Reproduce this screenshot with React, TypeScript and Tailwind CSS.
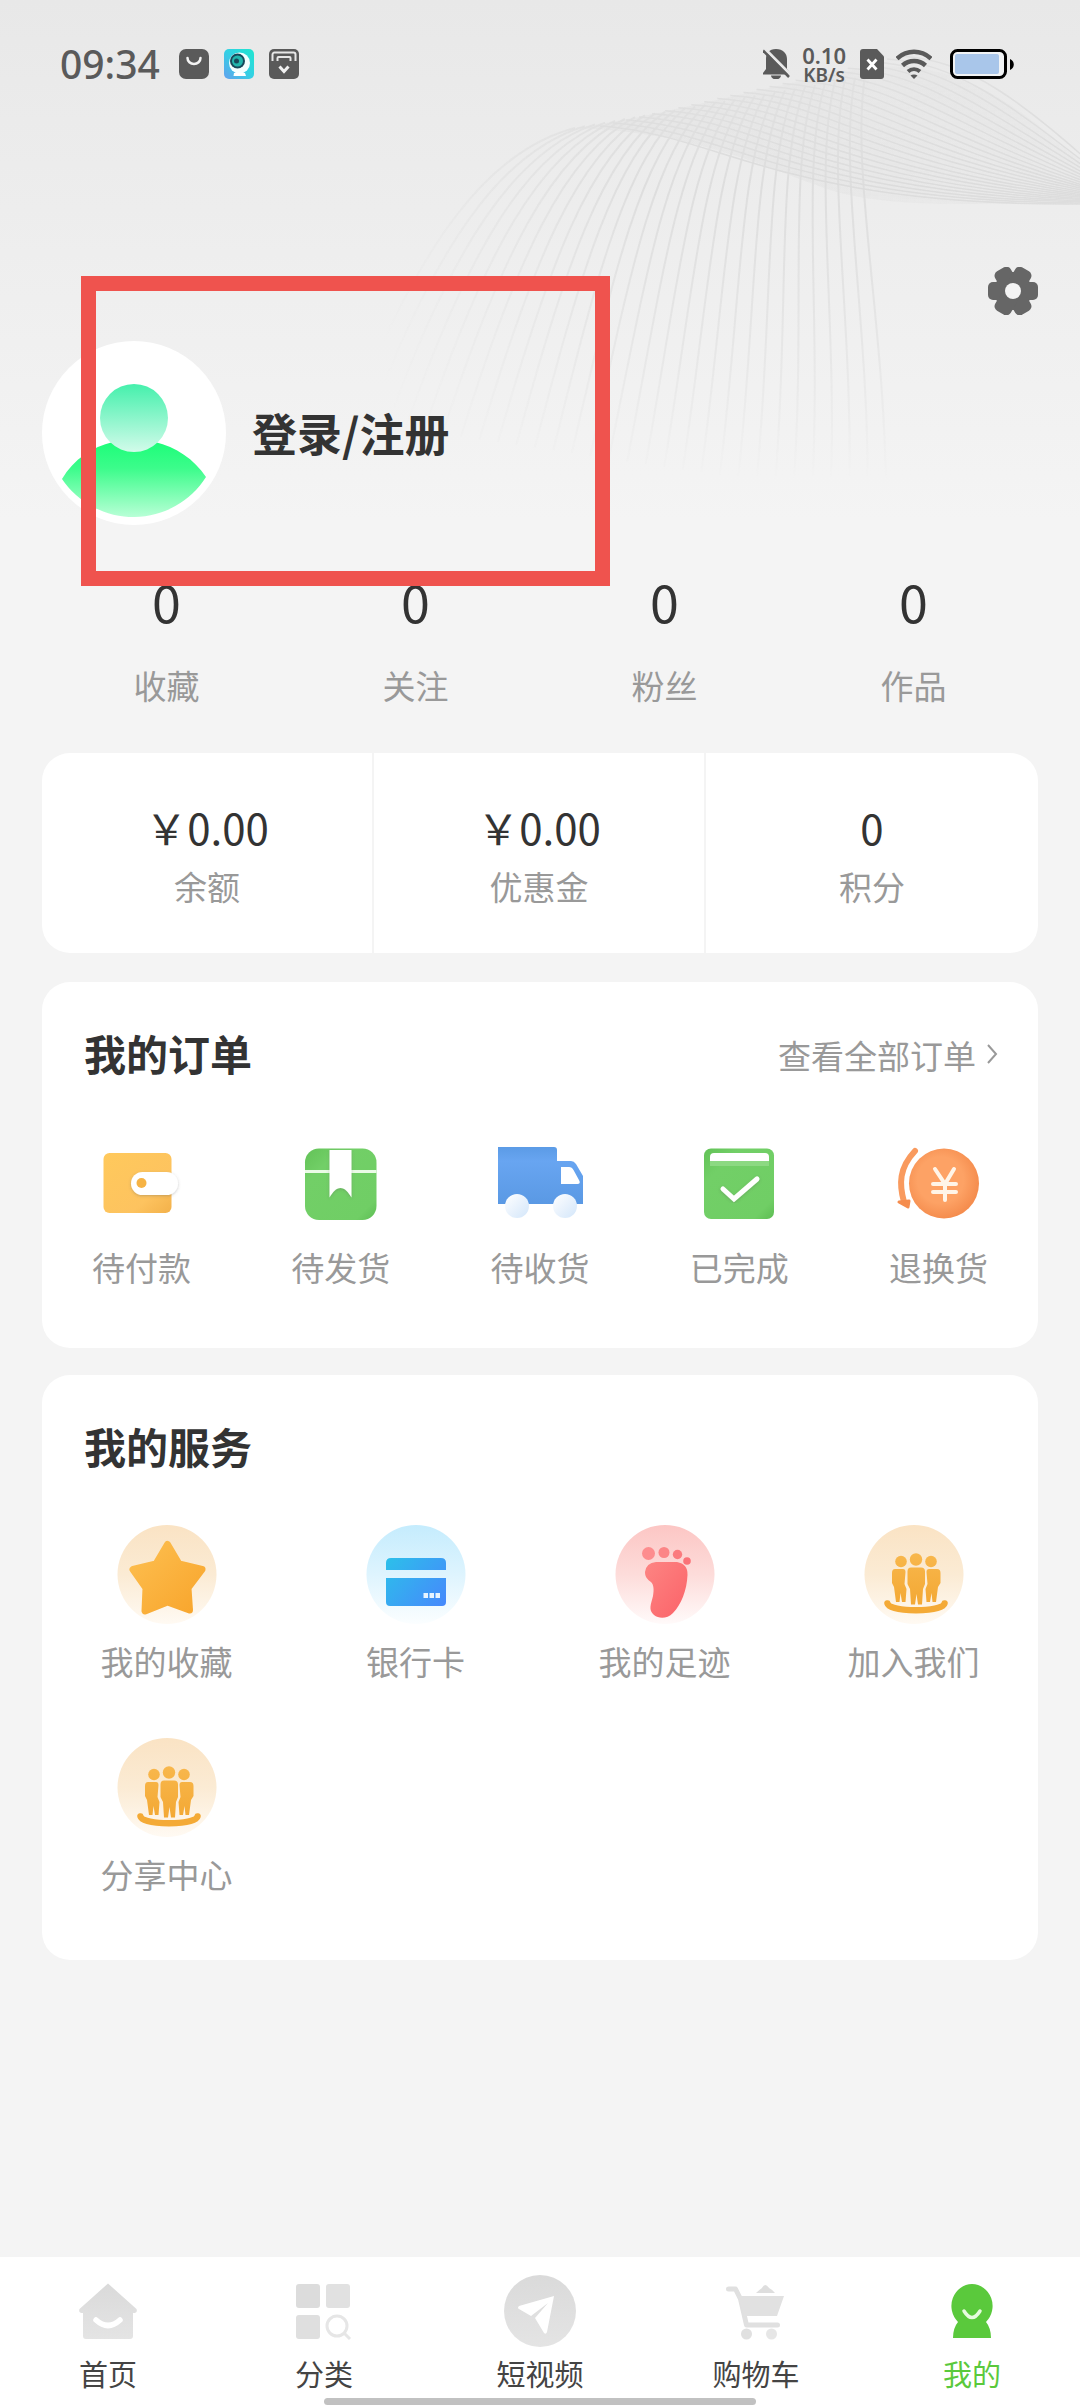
import type { ReactNode } from "react";

const lerp = (a: number, b: number, t: number) => a + (b - a) * t;
const curve = (from: number[], to: number[], t: number) => {
  const p = from.map((v, i) => lerp(v, to[i], t).toFixed(1));
  return `M${p[0]} ${p[1]}C${p[2]} ${p[3]} ${p[4]} ${p[5]} ${p[6]} ${p[7]}`;
};

/* Faded mesh of flowing lines behind the header */
function Waves() {
  const fan = Array.from({ length: 30 }, (_, i) => i / 29);
  const band = Array.from({ length: 24 }, (_, i) => i / 23);
  return (
    <svg className="pointer-events-none absolute right-0 top-0 h-[520px] w-[720px]" viewBox="360 0 720 520" fill="none" aria-hidden="true">
      <defs>
        <linearGradient id="fade" x1="0" y1="60" x2="0" y2="480" gradientUnits="userSpaceOnUse">
          <stop offset="0" stopColor="#fff" stopOpacity="0.6" />
          <stop offset="0.3" stopColor="#fff" stopOpacity="0.9" />
          <stop offset="0.7" stopColor="#fff" stopOpacity="0.45" />
          <stop offset="1" stopColor="#fff" stopOpacity="0" />
        </linearGradient>
        <linearGradient id="fanFade" x1="380" y1="0" x2="640" y2="0" gradientUnits="userSpaceOnUse">
          <stop offset="0" stopColor="#dcdcdc" stopOpacity="0" />
          <stop offset="1" stopColor="#dcdcdc" />
        </linearGradient>
        <linearGradient id="bandFill" x1="600" y1="100" x2="1080" y2="190" gradientUnits="userSpaceOnUse">
          <stop offset="0" stopColor="#dedede" stopOpacity="0.5" />
          <stop offset="1" stopColor="#dedede" stopOpacity="0.25" />
        </linearGradient>
        <mask id="waveMask" maskUnits="userSpaceOnUse" x="360" y="0" width="720" height="520">
          <rect x="360" width="720" height="520" fill="url(#fade)" />
        </mask>
      </defs>
      <g mask="url(#waveMask)">
        <path d="M575 128C680 112 740 92 865 68C950 60 1000 90 1080 160V198C980 208 880 206 830 190C770 170 700 132 575 128Z" fill="url(#bandFill)" />
        {fan.map((t) => (
          <path key={t} d={curve([575, 128, 490, 150, 420, 240, 350, 420], [865, 76, 850, 170, 886, 330, 886, 500], t)} stroke="url(#fanFade)" strokeWidth="2" />
        ))}
        {band.map((t) => (
          <path key={t} d={curve([600, 126, 720, 134, 780, 206, 1080, 204], [900, 56, 970, 60, 1020, 100, 1110, 180], t)} stroke="#dadada" strokeWidth="1.5" />
        ))}
      </g>
    </svg>
  );
}

function StatusBar() {
  return (
    <div className="relative flex h-32 items-center justify-between pl-[60px] pr-[66px] text-[#5a5a5a]">
      <div className="flex items-center gap-[15px]">
        <span className="mr-1 font-['Noto_Sans'] text-[39px] font-medium leading-10">09:34</span>
        <svg className="size-[30px]" viewBox="0 0 30 30" aria-hidden="true">
          <rect width="30" height="30" rx="7" fill="#5a5a5a" />
          <path d="M8.500 9a6.500 6 0 0 0 13 0" fill="none" stroke="#f2f2f2" strokeWidth="2.500" strokeLinecap="round" />
        </svg>
        <svg className="size-[30px]" viewBox="0 0 30 30" aria-hidden="true">
          <defs>
            <linearGradient id="cam" x1="0" y1="1" x2="1" y2="0">
              <stop offset="0" stopColor="#63a0ee" />
              <stop offset="0.500" stopColor="#34d0e4" />
              <stop offset="1" stopColor="#1fe6cf" />
            </linearGradient>
          </defs>
          <rect width="30" height="30" rx="5" fill="url(#cam)" />
          <circle cx="15.500" cy="14" r="10.500" fill="#f4ffff" />
          <path d="M10 24h11l1 3H9.500z" fill="#fff" />
          <circle cx="13.500" cy="12" r="7.500" fill="#17495b" />
          <circle cx="13.500" cy="12" r="5.500" fill="#22b5ac" />
          <circle cx="12.500" cy="12" r="2.500" fill="#17495b" />
        </svg>
        <svg className="size-[30px]" viewBox="0 0 30 30" aria-hidden="true">
          <rect width="30" height="30" rx="5" fill="#5a5a5a" />
          <path d="M3.500 12V5.500a2 2 0 0 1 2-2h19a2 2 0 0 1 2 2V12" fill="none" stroke="#e8e8e8" strokeWidth="2" />
          <path d="M8.500 12V9A1 1 0 0 1 9.500 8h11a1 1 0 0 1 1 1v3" fill="none" stroke="#e8e8e8" strokeWidth="2" />
          <path d="M10.500 17.500l4.500 5 4.500-5" fill="none" stroke="#f2f2f2" strokeWidth="3" />
        </svg>
      </div>
      <div className="flex items-center">
        <svg className="h-[30px] w-[27px]" viewBox="0 0 27 30" aria-hidden="true">
          <path d="M13 0c7 0 11 4.500 11 10v10l3 4v1.500H0V24l3-4V10C3 4.500 6 0 13 0z" fill="#5a5a5a" />
          <path d="M8 26.500h10a5 4 0 0 1-10 0z" fill="#5a5a5a" />
          <path d="M2 0L28 26" stroke="#e8e8e8" strokeWidth="3" />
          <path d="M0 1.500L26 28" stroke="#5a5a5a" strokeWidth="2.500" />
        </svg>
        <div className="ml-3 flex flex-col items-center font-['Noto_Sans'] font-semibold">
          <span className="text-[22px] leading-[22px]">0.10</span>
          <span className="text-[19px] leading-[19px]">KB/s</span>
        </div>
        <svg className="ml-[14px] h-[30px] w-6" viewBox="0 0 24 30" aria-hidden="true">
          <path d="M3 0h14l7 7.500V27a3 3 0 0 1-3 3H3a3 3 0 0 1-3-3V3a3 3 0 0 1 3-3z" fill="#5a5a5a" />
          <path d="M7.500 10.500l9 10m0-10l-9 10" stroke="#fff" strokeWidth="2.800" />
        </svg>
        <svg className="ml-3 h-[30px] w-9" viewBox="0 0 36 30" fill="none" stroke="#5a5a5a" strokeWidth="4.500" aria-hidden="true">
          <path d="M1 9.500C11 0.500 25 0.500 35 9.500" />
          <path d="M6.500 16.500C13 10.500 23 10.500 29.500 16.500" />
          <path d="M12 22.500c3.500-3 8.500-3 12 0" strokeWidth="4" />
          <path d="M14.500 26.500c2-1.500 5-1.500 7 0L18 30z" fill="#5a5a5a" stroke="none" />
        </svg>
        <svg className="ml-[18px] h-[30px] w-16" viewBox="0 0 64 30" aria-hidden="true">
          <rect x="1.500" y="1.500" width="54" height="27" rx="6" fill="#f1f3f5" stroke="#000" strokeWidth="3" />
          <rect x="5" y="5" width="44" height="20" rx="2" fill="#a9c6ea" />
          <path d="M60 10c5 2 5 9 0 11z" fill="#000" />
        </svg>
      </div>
    </div>
  );
}

function Avatar() {
  return (
    <svg className="size-[184px] shrink-0" viewBox="0 0 184 184" aria-hidden="true">
      <defs>
        <linearGradient id="head" x1="0" y1="0" x2="0" y2="1">
          <stop offset="0" stopColor="#45f0ac" />
          <stop offset="1" stopColor="#d2fbea" />
        </linearGradient>
        <linearGradient id="torso" x1="0" y1="0" x2="0" y2="1">
          <stop offset="0" stopColor="#1dfd79" />
          <stop offset="0.350" stopColor="#3cfc8b" />
          <stop offset="1" stopColor="#b8ffd6" />
        </linearGradient>
      </defs>
      <circle cx="92" cy="92" r="92" fill="#fff" />
      <path d="M20 138C32 118 50 106 71 101A36 36 0 0 0 113 101C134 106 152 118 164 136A86 86 0 0 1 20 138Z" fill="url(#torso)" />
      <circle cx="92" cy="77" r="34" fill="url(#head)" />
    </svg>
  );
}

const iconDefs = (
  <svg className="absolute size-0" aria-hidden="true">
    <defs>
      <linearGradient id="gold" x1="0" y1="0" x2="1" y2="1">
        <stop offset="0" stopColor="#ffc95c" />
        <stop offset="0.700" stopColor="#fdc35f" />
        <stop offset="1" stopColor="#f3b14a" />
      </linearGradient>
      <linearGradient id="leaf" x1="0" y1="0" x2="1" y2="1">
        <stop offset="0" stopColor="#62c257" />
        <stop offset="0.250" stopColor="#72cf67" />
        <stop offset="0.850" stopColor="#70ce65" />
        <stop offset="1" stopColor="#5dbd53" />
      </linearGradient>
      <linearGradient id="sky" x1="0" y1="0" x2="0" y2="1">
        <stop offset="0" stopColor="#5b9be6" />
        <stop offset="0.250" stopColor="#68a5f1" />
        <stop offset="1" stopColor="#5a99e4" />
      </linearGradient>
      <linearGradient id="wheel" x1="0" y1="0" x2="1" y2="1">
        <stop offset="0" stopColor="#fff" />
        <stop offset="1" stopColor="#d3e6fa" />
      </linearGradient>
      <radialGradient id="coin" cx="0.450" cy="0.450" r="0.550">
        <stop offset="0.600" stopColor="#fda265" />
        <stop offset="1" stopColor="#f58d4e" />
      </radialGradient>
      <linearGradient id="peach" x1="0" y1="0" x2="0" y2="1">
        <stop offset="0" stopColor="#fae3c4" />
        <stop offset="0.500" stopColor="#fbebd4" />
        <stop offset="1" stopColor="#fffaf3" />
      </linearGradient>
      <linearGradient id="ice" x1="0" y1="0" x2="0" y2="1">
        <stop offset="0" stopColor="#c5ecfd" />
        <stop offset="0.500" stopColor="#def4fe" />
        <stop offset="1" stopColor="#fbfeff" />
      </linearGradient>
      <linearGradient id="rose" x1="0" y1="0" x2="0" y2="1">
        <stop offset="0" stopColor="#fcc6c4" />
        <stop offset="0.500" stopColor="#fddcda" />
        <stop offset="1" stopColor="#fffafa" />
      </linearGradient>
      <linearGradient id="star" x1="0" y1="0" x2="1" y2="1">
        <stop offset="0" stopColor="#fdbf50" />
        <stop offset="1" stopColor="#f8a52c" />
      </linearGradient>
      <linearGradient id="bank" x1="20" y1="34" x2="80" y2="82" gradientUnits="userSpaceOnUse">
        <stop offset="0" stopColor="#2cc0ea" />
        <stop offset="1" stopColor="#4688fc" />
      </linearGradient>
      <linearGradient id="sole" x1="0" y1="0" x2="1" y2="1">
        <stop offset="0" stopColor="#fd8583" />
        <stop offset="1" stopColor="#fb6268" />
      </linearGradient>
      <linearGradient id="crew" x1="0" y1="30" x2="0" y2="92" gradientUnits="userSpaceOnUse">
        <stop offset="0" stopColor="#f8b74c" />
        <stop offset="1" stopColor="#f2a52f" />
      </linearGradient>
      <linearGradient id="silver" x1="0" y1="0" x2="0" y2="1">
        <stop offset="0" stopColor="#dadada" />
        <stop offset="1" stopColor="#e4e4e4" />
      </linearGradient>
      <filter id="shade" x="-20%" y="-20%" width="140%" height="140%">
        <feDropShadow dx="0" dy="1" stdDeviation="1.500" floodColor="#555" floodOpacity="0.300" />
      </filter>
    </defs>
  </svg>
);

function OrderIcon({ children }: { children: ReactNode }) {
  return (
    <svg className="size-24" viewBox="0 0 96 96" fill="none" aria-hidden="true">
      {children}
    </svg>
  );
}

const orders = [
  {
    label: "待付款",
    icon: (
      <OrderIcon>
        <rect x="9.500" y="17" width="68" height="60" rx="6" fill="url(#gold)" />
        <rect x="37" y="36" width="47" height="23" rx="11.500" fill="#fff" filter="url(#shade)" />
        <circle cx="47.500" cy="47" r="5" fill="#f6b344" />
      </OrderIcon>
    ),
  },
  {
    label: "待发货",
    icon: (
      <OrderIcon>
        <rect x="12" y="12.500" width="71.500" height="71.500" rx="14" fill="url(#leaf)" />
        <path d="M12 35.500h71.500" stroke="#eafbe6" strokeWidth="3" />
        <path d="M36.500 14h22v47.500C55 56 52 52 47.500 52S40 56 36.500 61.500Z" fill="#fff" filter="url(#shade)" />
      </OrderIcon>
    ),
  },
  {
    label: "待收货",
    icon: (
      <OrderIcon>
        <path d="M6 11h56q3 0 3 3v11h14q3 0 5 3l7 12v28H6Z" fill="url(#sky)" />
        <path d="M69 31h8q3 0 4.500 3l6 11q1 3-2 3H69Z" fill="#fff" />
        <circle cx="25" cy="70" r="12" fill="url(#wheel)" />
        <circle cx="73" cy="70" r="12" fill="url(#wheel)" />
      </OrderIcon>
    ),
  },
  {
    label: "已完成",
    icon: (
      <OrderIcon>
        <rect x="13" y="12.500" width="70" height="70.500" rx="7" fill="url(#leaf)" />
        <path d="M19 25v-4q0-4 4-4h51q4 0 4 4v4Z" fill="#fff" />
        <path d="M19 25h59v5H19Z" fill="#8cd982" />
        <path d="M32 53l11 10 23-20" stroke="#fff" strokeWidth="5" strokeLinecap="round" filter="url(#shade)" />
      </OrderIcon>
    ),
  },
  {
    label: "退换货",
    icon: (
      <OrderIcon>
        <circle cx="54" cy="47.500" r="35" fill="url(#coin)" />
        <path d="M25 15C9 32 9 48 14 66" stroke="#f99a5e" strokeWidth="6" strokeLinecap="round" />
        <path d="M9 66l10-1-1 6z" fill="#f58d4e" stroke="#f58d4e" strokeWidth="3" strokeLinejoin="round" />
        <path d="M45 33l10 15 9-15M55 48v16M43 48h23M43 56h23" stroke="#fff5e8" strokeWidth="4" strokeLinecap="round" />
      </OrderIcon>
    ),
  },
];

function ServiceIcon({ fill, children }: { fill: string; children: ReactNode }) {
  return (
    <svg className="size-[100px]" viewBox="0 0 100 100" fill="none" aria-hidden="true">
      <circle cx="50" cy="50.500" r="49.500" fill={fill} />
      {children}
    </svg>
  );
}

const crew = (
  <ServiceIcon fill="url(#peach)">
    <g fill="url(#crew)">
      <circle cx="37" cy="37.500" r="5.800" />
      <circle cx="67" cy="37.500" r="5.800" />
      <circle cx="52" cy="35.500" r="6.200" />
      <path d="M31 45h8q2.500 0 2.500 3l-1 12 2 5-1 13h-3.500l-1.500-9-1 9H32l-2-15-2-4V49q0-4 3-4z" />
      <path d="M73 45h-8q-2.500 0-2.500 3l1 12-2 5 1 13H66l1.500-9 1 9H72l2-15 2.500-4V49q0-4-3.500-4z" />
      <path d="M47 43.500h10q4 0 4 4V60l-2 5-1 15.500h-4L52.500 70 51 80.500h-4L46 65l-2.500-5V47.500q0-4 3.500-4z" />
    </g>
    <path d="M23.500 79.500C26 88.500 78 88.500 80.500 79.500" stroke="#f4aa36" strokeWidth="6.500" strokeLinecap="round" />
  </ServiceIcon>
);

const services = [
  {
    label: "我的收藏",
    icon: (
      <ServiceIcon fill="url(#peach)">
        <path d="M50.500 20.500L62 40 85 45.500 71 64 72.500 86 50.500 78 28 87 29 64 16 45.500 39 40Z" fill="url(#star)" stroke="url(#star)" strokeWidth="7" strokeLinejoin="round" />
      </ServiceIcon>
    ),
  },
  {
    label: "银行卡",
    icon: (
      <ServiceIcon fill="url(#ice)">
        <path d="M20 46v-7q0-5 5-5h50q5 0 5 5v7Z" fill="url(#bank)" />
        <path d="M20 54h60v24q0 4-4 4H24q-4 0-4-4Z" fill="url(#bank)" />
        <path d="M57.500 69h4.500v5h-4.500zM63.500 69H68v5h-4.500zM69.500 69H74v5h-4.500z" fill="#e6f4ff" />
      </ServiceIcon>
    ),
  },
  {
    label: "我的足迹",
    icon: (
      <ServiceIcon fill="url(#rose)">
        <circle cx="33.500" cy="29.500" r="6.500" fill="#fd8d8e" />
        <circle cx="49" cy="28.500" r="5.500" fill="#fc8586" />
        <circle cx="62.500" cy="30.500" r="4.700" fill="#fb7b7e" />
        <circle cx="72" cy="37" r="3.800" fill="#fa7378" />
        <path d="M41 38H62Q73 40 72.500 51C72 66 66 81 58 89C52 95 44 95 39 91C33 86 36 80 38 72C39 66 39 61 36 58C32 55 30 53 30 48Q31 39 41 38Z" fill="url(#sole)" />
      </ServiceIcon>
    ),
  },
  { label: "加入我们", icon: crew },
  { label: "分享中心", icon: crew },
];

const tabs = [
  {
    label: "首页",
    icon: (
      <svg className="size-[76px]" viewBox="0 0 76 76" fill="none" aria-hidden="true">
        <path d="M38 10.500L66.500 36q1.500 4-3.500 4v23q0 3-3 3H16q-3 0-3-3V40q-5 0-3.500-4Z" fill="url(#silver)" />
        <path d="M26 47q12 11 24 0" stroke="#fff" strokeWidth="5.500" strokeLinecap="round" />
      </svg>
    ),
  },
  {
    label: "分类",
    icon: (
      <svg className="size-[76px]" viewBox="0 0 76 76" fill="none" aria-hidden="true">
        <rect x="10" y="11" width="24" height="24" rx="3" fill="#dcdcdc" />
        <rect x="40" y="11" width="24" height="24" rx="3" fill="#e1e1e1" />
        <rect x="10" y="42" width="24" height="24" rx="3" fill="#dfdfdf" />
        <circle cx="51" cy="53" r="10" stroke="#e6e6e6" strokeWidth="3" />
        <path d="M58 60l6 6" stroke="#e6e6e6" strokeWidth="3" />
      </svg>
    ),
  },
  {
    label: "短视频",
    icon: (
      <svg className="size-[76px]" viewBox="0 0 76 76" fill="none" aria-hidden="true">
        <circle cx="38" cy="38" r="36" fill="url(#silver)" />
        <path d="M52 23L17 33q-2 2 0 3l12 7 17-13-13 15 9 15q2 2 3-1L52 23Z" fill="#fff" />
      </svg>
    ),
  },
  {
    label: "购物车",
    icon: (
      <svg className="size-[76px]" viewBox="0 0 76 76" fill="none" aria-hidden="true">
        <path d="M10.500 16h7l5 10 6 26h31" stroke="#e0e0e0" strokeWidth="5" strokeLinecap="round" strokeLinejoin="round" />
        <path d="M20 23h46l-7 20H27Z" fill="#e1e1e1" />
        <path d="M38 20q3-3 6-5 3-6 7 0 4 2 6 5Z" fill="#dedede" />
        <circle cx="28.500" cy="61" r="5.500" fill="#e0e0e0" />
        <circle cx="53.500" cy="61" r="5.500" fill="#e6e6e6" />
      </svg>
    ),
  },
  {
    label: "我的",
    active: true,
    icon: (
      <svg className="size-[76px]" viewBox="0 0 76 76" fill="none" aria-hidden="true">
        <path d="M38 11a21 22 0 0 1 14 38q5 6 5 16H19q0-10 5-16A21 22 0 0 1 38 11Z" fill="#5ac93c" />
        <path d="M30 38q8 13 16 0" stroke="#e7fbdf" strokeWidth="3.500" strokeLinecap="round" />
      </svg>
    ),
  },
];

const stats = ["收藏", "关注", "粉丝", "作品"];
const wallet = [
  { value: "\uFFE50.00", label: "余额" },
  { value: "\uFFE50.00", label: "优惠金" },
  { value: "0", label: "积分" },
];

export default function App() {
  return (
    <div className="relative flex min-h-screen flex-col overflow-hidden bg-[#f4f4f4] bg-[linear-gradient(#e8e8e8,#ebebeb_120px,#f4f4f4_520px)] font-['Noto_Sans_CJK_SC',sans-serif] text-[#333]">
      <Waves />
      {iconDefs}
      <StatusBar />
      <main className="relative px-[42px]">
        <div className="flex justify-end pt-[139px]">
          <button type="button" aria-label="设置">
            <svg className="h-12 w-[50px]" viewBox="-25 -24 50 48" fill="#666" aria-hidden="true">
              <circle r="19" />
              <rect x="-25" y="-9" width="50" height="18" rx="5" />
              <rect x="-25" y="-9" width="50" height="18" rx="5" transform="rotate(60)" />
              <rect x="-25" y="-9" width="50" height="18" rx="5" transform="rotate(120)" />
              <circle r="8" fill="#f4f4f4" />
            </svg>
          </button>
        </div>

        <section className="relative mt-[26px]">
          <button type="button" className="flex items-center gap-[26px] text-left">
            <Avatar />
            <span className="text-[45px] font-bold leading-[60px]">登录/注册</span>
          </button>
          <div className="pointer-events-none absolute -bottom-[61px] -top-[65px] left-[39px] z-10 w-[529px] border-[15px] border-[#ef534e]" />
        </section>

        <section className="mt-11 grid grid-cols-4">
          {stats.map((label) => (
            <button type="button" key={label} className="flex flex-col items-center gap-7">
              <span className="text-[52px] leading-[64px]">0</span>
              <span className="text-[33px] leading-[48px] text-[#999]">{label}</span>
            </button>
          ))}
        </section>

        <section className="mt-11 grid grid-cols-3 divide-x-2 divide-[#f4f4f4] rounded-[28px] bg-white">
          {wallet.map(({ value, label }) => (
            <button type="button" key={label} className="flex flex-col items-center gap-[7px] pb-[43px] pt-[46px]">
              <span className="text-[42px] leading-[56px]">{value}</span>
              <span className="text-[33px] leading-[48px] text-[#999]">{label}</span>
            </button>
          ))}
        </section>

        <section className="mt-[29px] rounded-[28px] bg-white pb-[57px] pt-[41px]">
          <div className="flex items-end justify-between pl-[42px] pr-[38px]">
            <h2 className="text-[42px] font-bold leading-[60px]">我的订单</h2>
            <a href="#orders" className="flex items-center gap-2 pb-1 text-[33px] leading-[48px] text-[#999]">
              查看全部订单
              <svg className="h-6 w-4" viewBox="0 0 16 24" fill="none" stroke="#999" strokeWidth="2" aria-hidden="true">
                <path d="M4 2l8 9-8 9" />
              </svg>
            </a>
          </div>
          <div className="mt-[53px] grid grid-cols-5">
            {orders.map(({ label, icon }) => (
              <button type="button" key={label} className="flex flex-col items-center gap-[11px]">
                {icon}
                <span className="text-[33px] leading-[48px] text-[#999]">{label}</span>
              </button>
            ))}
          </div>
        </section>

        <section className="mt-[27px] rounded-[28px] bg-white pb-[62px] pt-[41px]">
          <h2 className="pl-[42px] text-[42px] font-bold leading-[60px]">我的服务</h2>
          <div className="mt-12 grid grid-cols-4 gap-y-[52px]">
            {services.map(({ label, icon }) => (
              <button type="button" key={label} className="flex flex-col items-center gap-[13px]">
                {icon}
                <span className="text-[33px] leading-[48px] text-[#999]">{label}</span>
              </button>
            ))}
          </div>
        </section>
      </main>

      <nav className="relative mt-auto bg-white pb-[3px] pt-4">
        <div className="grid grid-cols-5">
          {tabs.map(({ label, icon, active }) => (
            <a key={label} href={`#${label}`} className={active ? "flex flex-col items-center text-[#5ac93c]" : "flex flex-col items-center text-[#444]"}>
              {icon}
              <span className="mt-1 text-[29px] leading-10">{label}</span>
            </a>
          ))}
        </div>
        <div className="mx-auto mt-[5px] h-[7px] w-2/5 rounded-full bg-[#c1c1c1]" />
      </nav>
    </div>
  );
}
